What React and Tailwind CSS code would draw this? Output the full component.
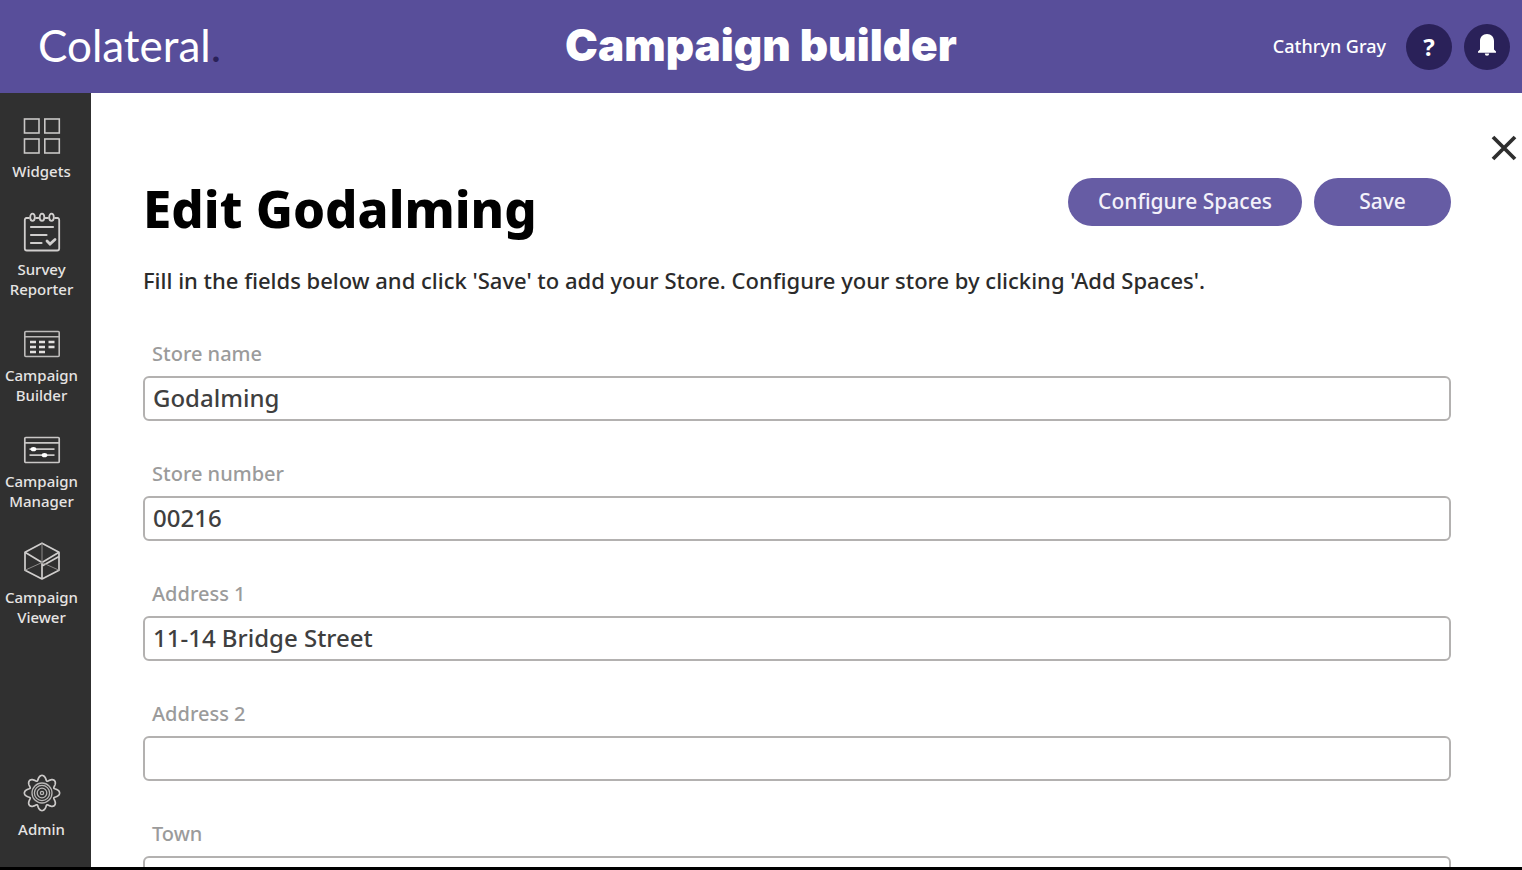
import { useState } from 'react';

function WidgetsIcon() {
  return (
    <svg className="w-[38px] h-[36px]" viewBox="0 0 38 36" fill="none" stroke="#c9c7c6" strokeWidth="1.6">
      <rect x="1.5" y="1" width="14.5" height="14" />
      <rect x="21.8" y="1" width="14.5" height="14" />
      <rect x="1.5" y="21" width="14.5" height="14" />
      <rect x="21.8" y="21" width="14.5" height="14" />
    </svg>
  );
}

function SurveyIcon() {
  return (
    <svg className="w-[38px] h-[40px]" viewBox="0 0 38 40" fill="none" stroke="#d0cecd" strokeWidth="1.8" strokeLinecap="round">
      <path d="M6 6H3.5Q1.8 6 1.8 8v28.500q0 2 2 2h30.400q2 0 2-2V8q0-2-1.700-2H32" />
      <ellipse cx="9.5" cy="5.2" rx="2.3" ry="3.6" />
      <ellipse cx="19" cy="5.2" rx="2.3" ry="3.6" />
      <ellipse cx="28.5" cy="5.2" rx="2.3" ry="3.6" />
      <path d="M13 6h2.5M22.5 6H25" />
      <path d="M8 15h22M8 23h15.5M8 31h10.5" strokeWidth="2.2" />
      <path d="M24 29l3 3 5-4.5" strokeWidth="2.8" />
    </svg>
  );
}

function BuilderIcon() {
  return (
    <svg className="w-[38px] h-[28px]" viewBox="0 0 38 28" fill="none" stroke="#bdbbba" strokeWidth="1.6">
      <rect x="1.8" y="1.5" width="34.4" height="25" rx="1" />
      <path d="M2 6.8h34" />
      <g stroke="#e2e0df" strokeWidth="2.4">
        <path d="M7 12h6M16 12h6M25.5 12h6" />
        <path d="M7 17h6M16 17h6M25.5 17h6" />
        <path d="M7 22h6M16 22h6" />
      </g>
    </svg>
  );
}

function ManagerIcon() {
  return (
    <svg className="w-[38px] h-[28px]" viewBox="0 0 38 28" fill="none" stroke="#c9c7c6" strokeWidth="1.7">
      <rect x="1.8" y="1.5" width="34.4" height="25" rx="1" />
      <path d="M2 6.8h34" />
      <path d="M6.5 13.2h25M6.5 19.2h25" />
      <g fill="#ffffff" stroke="none">
        <ellipse cx="10.5" cy="13.2" rx="2.8" ry="2.1" />
        <ellipse cx="21.5" cy="19.2" rx="2.8" ry="2.1" />
      </g>
    </svg>
  );
}

function ViewerIcon() {
  return (
    <svg className="w-[38px] h-[38px]" viewBox="0 0 38 38" fill="none" stroke="#d0cecd" strokeWidth="1.7" strokeLinejoin="round">
      <path d="M19 1.2L36 10.2v18L19 37 2 28.2v-18z" />
      <path d="M2 10.2l17 10.3 17-10.3M19 20.5V37M19 24l17-9.5" />
      <path d="M19 1.5v19M2.5 28L19 20.5M19 20.5L35.5 28" stroke="#8c8a89" strokeWidth="1" />
    </svg>
  );
}

function GearIcon() {
  // eight rounded teeth, traced as one wavy outline
  const points = Array.from({ length: 193 }, (_, i) => {
    const angle = (i / 192) * Math.PI * 2;
    const radius = 15.2 + 2.4 * Math.cos(angle * 8);
    const swing = angle + 0.035 * Math.sin(angle * 8);
    return `${(19 + radius * Math.cos(swing)).toFixed(2)},${(19 + radius * Math.sin(swing)).toFixed(2)}`;
  }).join(' ');

  return (
    <svg className="w-[38px] h-[38px]" viewBox="0 0 38 38" fill="none" stroke="#b9b7b6" strokeWidth="1.3">
      <polygon points={points} stroke="#cbc9c8" strokeWidth="1.7" />
      <circle cx="19" cy="19" r="10" />
      <circle cx="19" cy="19" r="7.6" />
      <circle cx="19" cy="19" r="4.8" />
      <circle cx="19" cy="19" r="1.6" />
    </svg>
  );
}

const navItems = [
  { id: 'widgets', label: 'Widgets', Icon: WidgetsIcon },
  { id: 'survey', label: 'Survey Reporter', Icon: SurveyIcon },
  { id: 'builder', label: 'Campaign Builder', Icon: BuilderIcon },
  { id: 'manager', label: 'Campaign Manager', Icon: ManagerIcon },
  { id: 'viewer', label: 'Campaign Viewer', Icon: ViewerIcon },
];

const fields = [
  { name: 'storeName', label: 'Store name' },
  { name: 'storeNumber', label: 'Store number' },
  { name: 'address1', label: 'Address 1' },
  { name: 'address2', label: 'Address 2' },
  { name: 'town', label: 'Town' },
];

function NavLink({ label, Icon }) {
  return (
    <a href="#" className="flex flex-col items-center gap-[7px] text-center text-[15px] leading-5 font-medium text-[#e6e4e3]">
      <Icon />
      <span>{label}</span>
    </a>
  );
}

function Header() {
  return (
    <header className="grid grid-cols-[1fr_auto_1fr] items-center h-[93px] shrink-0 bg-[#584e9a] px-3 text-white">
      <a href="#" className="pb-1 pl-[26px] font-['Lato',sans-serif] text-[44px] leading-[48px]">
        Colateral<span className="text-[#2a2159]">.</span>
      </a>
      <p className="pb-1 font-['Inter',sans-serif] text-[44px] leading-[48px] font-black">Campaign builder</p>
      <div className="flex items-center justify-end">
        <span className="mr-5 text-[18px] font-medium">Cathryn Gray</span>
        <button type="button" aria-label="Help" className="mr-3 flex size-[46px] items-center justify-center rounded-full bg-[#2a2159] text-2xl font-bold">
          ?
        </button>
        <button type="button" aria-label="Notifications" className="flex size-[46px] items-center justify-center rounded-full bg-[#2a2159]">
          <svg className="w-[20px] h-[24px] mb-1" viewBox="0 0 20 24" fill="#ffffff">
            <path d="M10 1C5.8 1 3 4 3 8v8.500L1 18.500v1.200h18v-1.200L17 16.500V8C17 4 14.200 1 10 1z" />
            <path d="M7.8 20.5h4.4a2.2 2.2 0 0 1-4.4 0z" />
          </svg>
        </button>
      </div>
    </header>
  );
}

export default function App() {
  const [store, setStore] = useState({
    storeName: 'Godalming',
    storeNumber: '00216',
    address1: '11-14 Bridge Street',
    address2: '',
    town: '',
  });

  const handleChange = (e) => {
    setStore({ ...store, [e.target.name]: e.target.value });
  };

  return (
    <div className="flex h-screen flex-col overflow-hidden border-b-[3px] border-black bg-white font-['Noto_Sans',sans-serif]">
      <Header />

      <div className="flex min-h-0 flex-1">
        {/* Sidebar */}
        <nav className="flex w-[91px] shrink-0 flex-col justify-between bg-[#303030] pt-[25px] pb-7 pr-2">
          <div className="flex flex-col gap-[31px]">
            {navItems.map(({ id, label, Icon }) => (
              <NavLink key={id} label={label} Icon={Icon} />
            ))}
          </div>
          <NavLink label="Admin" Icon={GearIcon} />
        </nav>

        {/* Edit form */}
        <main className="min-w-0 flex-1 overflow-hidden">
          <div className="flex justify-end pt-[41px] pr-1">
            <button type="button" aria-label="Close" className="flex size-7 items-center justify-center">
              <svg className="size-7" viewBox="0 0 28 28" fill="none" stroke="#2e2e2e" strokeWidth="3.8">
                <path d="M3 3l22 22M25 3L3 25" />
              </svg>
            </button>
          </div>

          <form className="pl-[52px] pr-[71px]" onSubmit={(e) => e.preventDefault()}>
            <div className="flex items-start justify-between pt-4">
              <h1 className="text-[51px] leading-[60px] font-extrabold text-black">Edit Godalming</h1>
              <div className="flex gap-3">
                <button type="button" className="h-12 w-[234px] rounded-full bg-[#665ca4] text-[21px] font-medium text-[#f3f1fa]">
                  Configure Spaces
                </button>
                <button type="submit" className="h-12 w-[137px] rounded-full bg-[#665ca4] text-[21px] font-medium text-[#f3f1fa]">
                  Save
                </button>
              </div>
            </div>

            <p className="mt-7 text-[22px] leading-7 font-medium text-[#2b2b2b]">
              Fill in the fields below and click 'Save' to add your Store. Configure your store by clicking 'Add Spaces'.
            </p>

            <div className="mt-12 flex flex-col gap-[41px]">
              {fields.map((field) => (
                <div key={field.name} className="flex flex-col gap-[10px]">
                  <label htmlFor={field.name} className="pl-[9px] text-[20px] leading-6 font-medium text-[#9b9b9b]">
                    {field.label}
                  </label>
                  <input
                    id={field.name}
                    name={field.name}
                    type="text"
                    value={store[field.name]}
                    onChange={handleChange}
                    className="h-[45px] w-full rounded-md border-2 border-[#b3b1b0] px-2 pb-[2px] text-2xl font-medium text-[#3f3f3f]"
                  />
                </div>
              ))}
            </div>
          </form>
        </main>
      </div>
    </div>
  );
}
